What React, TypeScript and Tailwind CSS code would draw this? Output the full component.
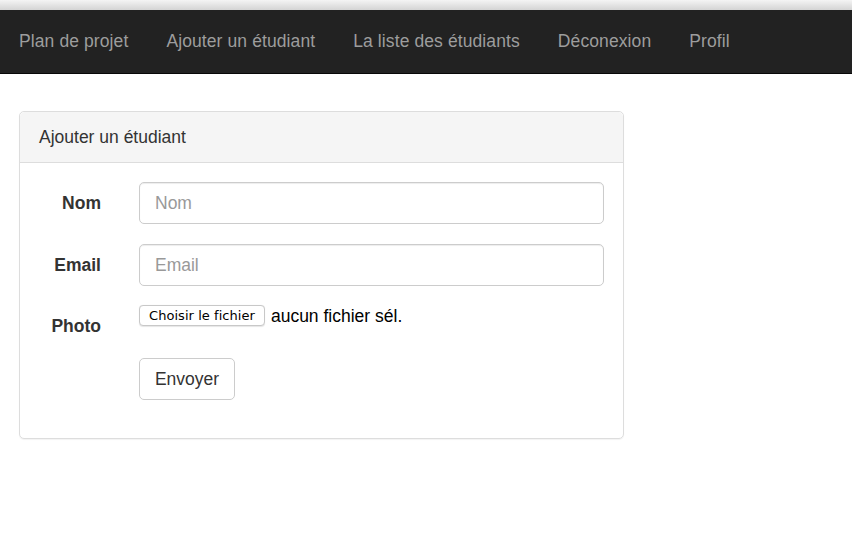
import React from "react";

const font = { fontFamily: '"Liberation Sans", Arial, sans-serif' };

export default function App() {
  const nav = ["Plan de projet", "Ajouter un étudiant", "La liste des étudiants", "Déconexion", "Profil"];
  return (
    <div className="min-h-[552px] w-full bg-white text-[#333] text-[17.5px] leading-[24.5px]" style={font}>
      <div className="h-[10px] bg-gradient-to-b from-[#f4f4f4] to-[#d4d4d4]" />
      <nav className="h-[64px] bg-[#222] border-b border-[#080808] flex items-center px-0">
        {nav.map((n) => (
          <a key={n} className="px-[19px] text-[#9d9d9d] whitespace-nowrap tracking-[0.1px]">
            {n}
          </a>
        ))}
      </nav>
      <div className="pl-[19px] pt-[37px]">
        <div className="w-[605px] border border-[#ddd] rounded-[5px] shadow-[0_1px_1px_rgba(0,0,0,0.05)]">
          <div className="h-[51px] bg-[#f5f5f5] border-b border-[#ddd] rounded-t-[5px] px-[19px] flex items-center">
            Ajouter un étudiant
          </div>
          <div className="px-[19px] pt-[19px] pb-[19px]">
            <div className="flex mb-[20px]">
              <label className="w-[62px] text-right font-bold pt-[9px]">Nom</label>
              <input
                placeholder="Nom"
                className="ml-[38px] flex-1 h-[42px] border border-[#ccc] rounded-[5px] px-[15px] text-[17.5px] placeholder:text-[#999] outline-none shadow-[inset_0_1px_1px_rgba(0,0,0,0.075)]"
                style={font}
              />
            </div>
            <div className="flex mb-[19px]">
              <label className="w-[62px] text-right font-bold pt-[9px]">Email</label>
              <input
                placeholder="Email"
                className="ml-[38px] flex-1 h-[42px] border border-[#ccc] rounded-[5px] px-[15px] text-[17.5px] placeholder:text-[#999] outline-none shadow-[inset_0_1px_1px_rgba(0,0,0,0.075)]"
                style={font}
              />
            </div>
            <div className="flex mb-[19px]">
              <label className="w-[62px] text-right font-bold pt-[9px] h-[34px]">Photo</label>
              <div className="ml-[38px] flex items-start">
                <span
                  className="h-[21px] px-[9px] border border-[#c8c8c8] rounded-[4px] bg-white text-[13px] leading-[19px] text-black shadow-[0_0.5px_1px_rgba(0,0,0,0.1)] whitespace-nowrap tracking-[0.05px]"
                  style={{ fontFamily: '"DejaVu Sans", sans-serif' }}
                >
                  Choisir le fichier
                </span>
                <span className="ml-[6px] text-black leading-[21px] mt-[1px] whitespace-nowrap">aucun fichier sél.</span>
              </div>
            </div>
            <div className="flex mb-[19px]">
              <div className="w-[62px]" />
              <button
                className="ml-[38px] h-[42px] w-[96px] border border-[#ccc] rounded-[5px] bg-white text-[17.5px] text-[#333]"
                style={font}
              >
                Envoyer
              </button>
            </div>
          </div>
        </div>
      </div>
    </div>
  );
}
